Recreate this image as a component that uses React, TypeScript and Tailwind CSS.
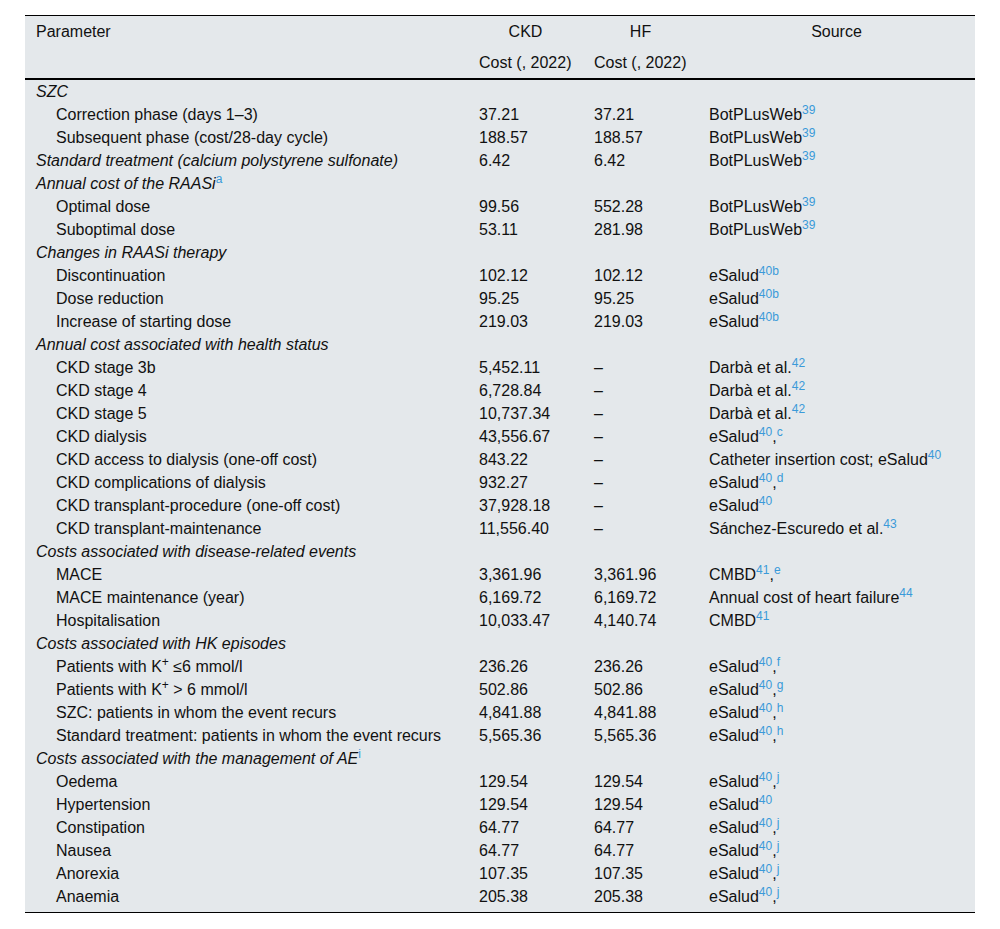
type Src = [string, string?, string?]

type Row = {
  label: React.ReactNode
  group?: boolean
  ckd?: string
  hf?: string
  src?: Src
}

const bot: Src = ["BotPLusWeb", "39"]

const rows: Row[] = [
  { label: "SZC", group: true },
  { label: "Correction phase (days 1–3)", ckd: "37.21", hf: "37.21", src: bot },
  { label: "Subsequent phase (cost/28-day cycle)", ckd: "188.57", hf: "188.57", src: bot },
  { label: "Standard treatment (calcium polystyrene sulfonate)", group: true, ckd: "6.42", hf: "6.42", src: bot },
  { label: <>Annual cost of the RAASi<sup className="not-italic text-[#3a9ad9]">a</sup></>, group: true },
  { label: "Optimal dose", ckd: "99.56", hf: "552.28", src: bot },
  { label: "Suboptimal dose", ckd: "53.11", hf: "281.98", src: bot },
  { label: "Changes in RAASi therapy", group: true },
  { label: "Discontinuation", ckd: "102.12", hf: "102.12", src: ["eSalud", "40b"] },
  { label: "Dose reduction", ckd: "95.25", hf: "95.25", src: ["eSalud", "40b"] },
  { label: "Increase of starting dose", ckd: "219.03", hf: "219.03", src: ["eSalud", "40b"] },
  { label: "Annual cost associated with health status", group: true },
  { label: "CKD stage 3b", ckd: "5,452.11", hf: "–", src: ["Darbà et al.", "42"] },
  { label: "CKD stage 4", ckd: "6,728.84", hf: "–", src: ["Darbà et al.", "42"] },
  { label: "CKD stage 5", ckd: "10,737.34", hf: "–", src: ["Darbà et al.", "42"] },
  { label: "CKD dialysis", ckd: "43,556.67", hf: "–", src: ["eSalud", "40", "c"] },
  { label: "CKD access to dialysis (one-off cost)", ckd: "843.22", hf: "–", src: ["Catheter insertion cost; eSalud", "40"] },
  { label: "CKD complications of dialysis", ckd: "932.27", hf: "–", src: ["eSalud", "40", "d"] },
  { label: "CKD transplant-procedure (one-off cost)", ckd: "37,928.18", hf: "–", src: ["eSalud", "40"] },
  { label: "CKD transplant-maintenance", ckd: "11,556.40", hf: "–", src: ["Sánchez-Escuredo et al.", "43"] },
  { label: "Costs associated with disease-related events", group: true },
  { label: "MACE", ckd: "3,361.96", hf: "3,361.96", src: ["CMBD", "41", "e"] },
  { label: "MACE maintenance (year)", ckd: "6,169.72", hf: "6,169.72", src: ["Annual cost of heart failure", "44"] },
  { label: "Hospitalisation", ckd: "10,033.47", hf: "4,140.74", src: ["CMBD", "41"] },
  { label: "Costs associated with HK episodes", group: true },
  { label: <>Patients with K<sup>+</sup> ≤6 mmol/l</>, ckd: "236.26", hf: "236.26", src: ["eSalud", "40", "f"] },
  { label: <>Patients with K<sup>+</sup> &gt; 6 mmol/l</>, ckd: "502.86", hf: "502.86", src: ["eSalud", "40", "g"] },
  { label: "SZC: patients in whom the event recurs", ckd: "4,841.88", hf: "4,841.88", src: ["eSalud", "40", "h"] },
  { label: "Standard treatment: patients in whom the event recurs", ckd: "5,565.36", hf: "5,565.36", src: ["eSalud", "40", "h"] },
  { label: <>Costs associated with the management of AE<sup className="not-italic text-[#3a9ad9]">i</sup></>, group: true },
  { label: "Oedema", ckd: "129.54", hf: "129.54", src: ["eSalud", "40", "j"] },
  { label: "Hypertension", ckd: "129.54", hf: "129.54", src: ["eSalud", "40"] },
  { label: "Constipation", ckd: "64.77", hf: "64.77", src: ["eSalud", "40", "j"] },
  { label: "Nausea", ckd: "64.77", hf: "64.77", src: ["eSalud", "40", "j"] },
  { label: "Anorexia", ckd: "107.35", hf: "107.35", src: ["eSalud", "40", "j"] },
  { label: "Anaemia", ckd: "205.38", hf: "205.38", src: ["eSalud", "40", "j"] },
]

const Source = ({ src }: { src?: Src }) => {
  if (!src) return null
  const [text, ref, note] = src
  return (
    <>
      {text}
      {ref && <sup className="text-[#3a9ad9]">{ref}</sup>}
      {note && (
        <>
          ,<sup className="text-[#3a9ad9]">{note}</sup>
        </>
      )}
    </>
  )
}

const App = () => {
  return (
    <div className="min-h-screen bg-white pt-[15px] pl-[25px] font-['Liberation_Sans',Arial,sans-serif] text-[16px] text-[#111]">
      <table className="w-[950px] table-fixed border-collapse bg-[#e4e8eb] border-t border-b border-black">
        <colgroup>
          <col className="w-[443px]" />
          <col className="w-[115px]" />
          <col className="w-[115px]" />
          <col className="w-[277px]" />
        </colgroup>
        <thead className="border-b-2 border-black">
          <tr className="leading-[23px]">
            <th className="py-[4px] px-[11px] text-left font-normal">Parameter</th>
            <th className="py-[4px] px-[11px] text-center font-normal">CKD</th>
            <th className="py-[4px] px-[11px] text-center font-normal">HF</th>
            <th className="py-[4px] px-[11px] text-center font-normal">Source</th>
          </tr>
          <tr className="leading-[23px]">
            <th className="py-[4px] px-[11px]"></th>
            <th className="py-[4px] px-[11px] text-left font-normal whitespace-nowrap">Cost (, 2022)</th>
            <th className="py-[4px] px-[11px] text-left font-normal whitespace-nowrap">Cost (, 2022)</th>
            <th className="py-[4px] px-[11px]"></th>
          </tr>
        </thead>
        <tbody>
          {rows.map((r, i) => {
            const last = i === rows.length - 1
            const cell = last ? "px-[11px] pb-[4px] align-top" : "px-[11px] align-top"
            return (
              <tr key={i} className="leading-[23px]">
                <td className={`${cell} whitespace-nowrap ${r.group ? "italic" : "!pl-[31px]"}`}>{r.label}</td>
                <td className={cell}>{r.ckd}</td>
                <td className={cell}>{r.hf}</td>
                <td className={`${cell} whitespace-nowrap`}>
                  <Source src={r.src} />
                </td>
              </tr>
            )
          })}
        </tbody>
      </table>
    </div>
  )
}

export default App
